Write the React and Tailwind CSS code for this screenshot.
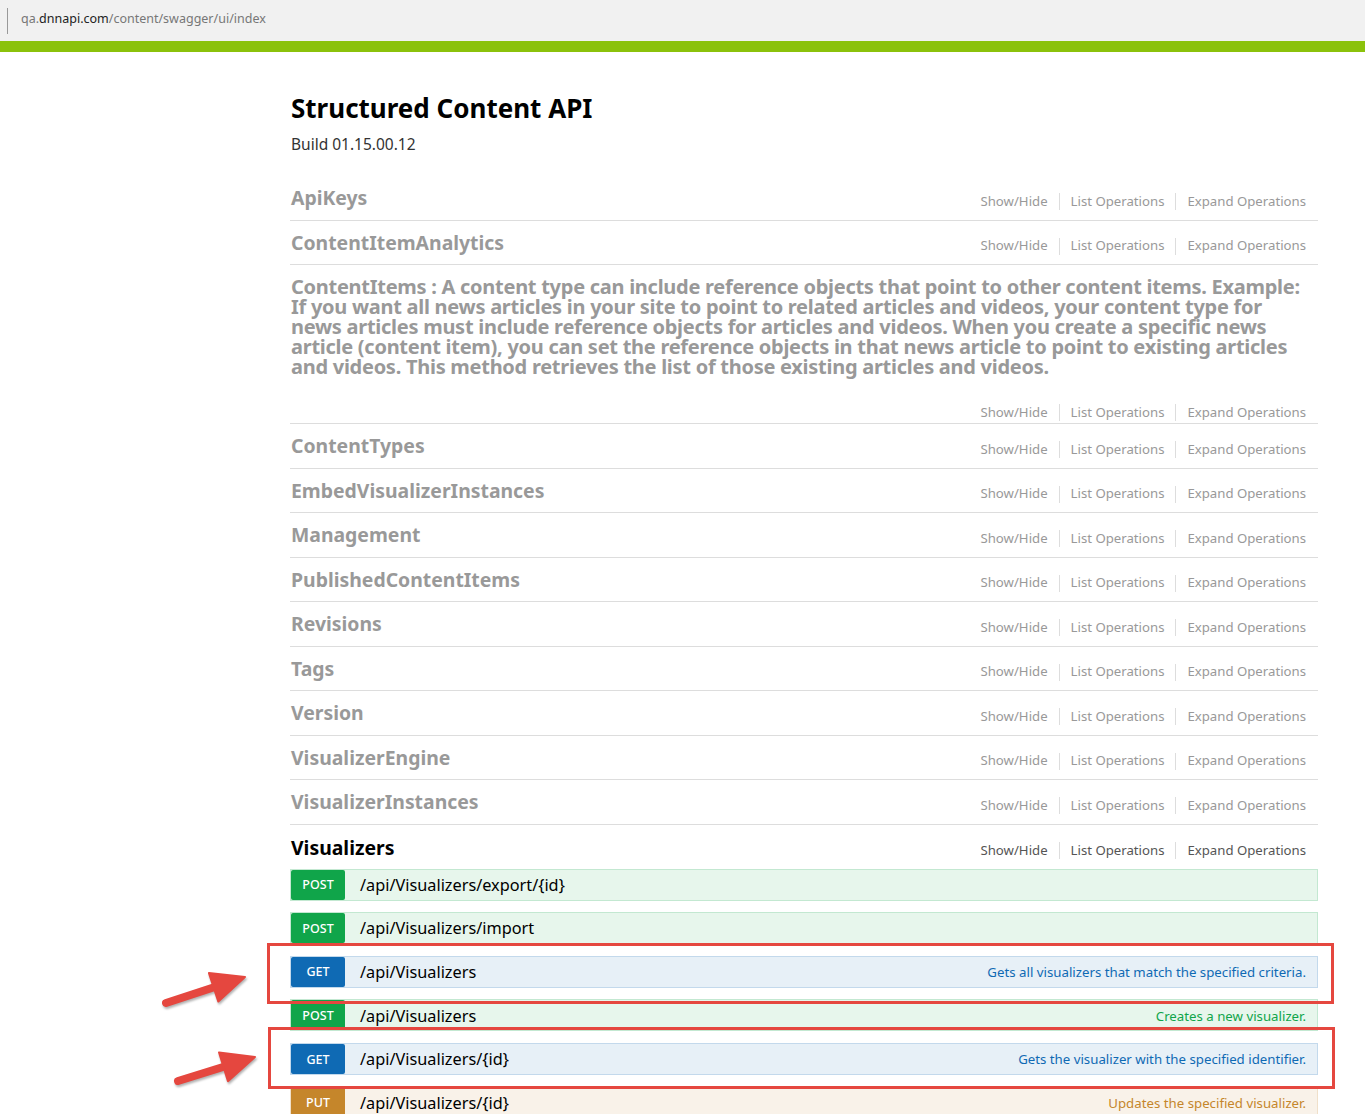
import React from 'react'

const FONT = { fontFamily: '"Noto Sans", "Open Sans", sans-serif' }

const GROUPS = [
  'ApiKeys',
  'ContentItemAnalytics',
  'ContentItems',
  'ContentTypes',
  'EmbedVisualizerInstances',
  'Management',
  'PublishedContentItems',
  'Revisions',
  'Tags',
  'Version',
  'VisualizerEngine',
  'VisualizerInstances',
]

const CONTENT_ITEMS_LINES = [
  'ContentItems : A content type can include reference objects that point to other content items. Example:',
  'If you want all news articles in your site to point to related articles and videos, your content type for',
  'news articles must include reference objects for articles and videos. When you create a specific news',
  'article (content item), you can set the reference objects in that news article to point to existing articles',
  'and videos. This method retrieves the list of those existing articles and videos.',
]

const OPS = [
  { method: 'post', path: '/api/Visualizers/export/{id}', desc: '' },
  { method: 'post', path: '/api/Visualizers/import', desc: '' },
  { method: 'get', path: '/api/Visualizers', desc: 'Gets all visualizers that match the specified criteria.' },
  { method: 'post', path: '/api/Visualizers', desc: 'Creates a new visualizer.' },
  { method: 'get', path: '/api/Visualizers/{id}', desc: 'Gets the visualizer with the specified identifier.' },
  { method: 'put', path: '/api/Visualizers/{id}', desc: 'Updates the specified visualizer.' },
]

const METHOD_STYLES = {
  post: { row: 'bg-[#e7f6ec] border-[#c3e8d1]', badge: 'bg-[#10a54a]', desc: 'text-[#10a54a]' },
  get: { row: 'bg-[#e7f0f7] border-[#c3d9ec]', badge: 'bg-[#0f6ab4]', desc: 'text-[#0f6ab4]' },
  put: { row: 'bg-[#f9f2e9] border-[#f0e0ca]', badge: 'bg-[#c5862b]', desc: 'text-[#c5862b]' },
}

function Links({ dark }) {
  const color = dark ? 'text-[#555]' : 'text-[#999]'
  return (
    <div className={`flex items-center text-[13.2px] ${color} pr-[12px] mt-[8px]`}>
      <span>Show/Hide</span>
      <span className="mx-[11px] h-[17px] w-px bg-[#ddd]" />
      <span>List Operations</span>
      <span className="mx-[11px] h-[17px] w-px bg-[#ddd]" />
      <span>Expand Operations</span>
    </div>
  )
}

function GroupRow({ name }) {
  return (
    <div className="h-[44.5px] border-b border-[#ddd] flex items-center justify-between">
      <h2 className="text-[19.4px] font-bold text-[#999] pl-[1px]">{name}</h2>
      <Links />
    </div>
  )
}

function ContentItemsRow() {
  return (
    <div className="border-b border-[#ddd] pt-[12px]">
      <h2 className="text-[20px] leading-[20px] font-bold text-[#999] pl-[1px] tracking-[-0.27px]">
        {CONTENT_ITEMS_LINES.map((l, i) => (
          <span key={i} className="block whitespace-nowrap">{l}</span>
        ))}
      </h2>
      <div className="flex justify-end h-[22px] mt-[24px] items-start">
        <div className="-mt-[6px]">
          <Links />
        </div>
      </div>
    </div>
  )
}

function OpRow({ op }) {
  const s = METHOD_STYLES[op.method]
  return (
    <div className={`h-[32px] border ${s.row} flex items-center`}>
      <span className={`${s.badge} h-full w-[54px] rounded-[2px] text-white text-[12.5px] font-medium uppercase flex items-center justify-center pt-[2px]`}>
        {op.method}
      </span>
      <span className="ml-[15px] text-[16.3px] text-black pt-[1px]">{op.path}</span>
      <span className={`ml-auto pr-[11px] pt-[3px] text-[13.25px] ${s.desc}`}>{op.desc}</span>
    </div>
  )
}

function Arrow({ tail, tip }) {
  const dx = tip[0] - tail[0]
  const dy = tip[1] - tail[1]
  const len = Math.hypot(dx, dy)
  const ux = dx / len
  const uy = dy / len
  const nx = -uy
  const ny = ux
  const hl = 33
  const hw = 15
  const bx = tip[0] - hl * ux
  const by = tip[1] - hl * uy
  return (
    <g>
      <line x1={tail[0]} y1={tail[1]} x2={bx + ux * 2} y2={by + uy * 2} stroke="#e5473f" strokeWidth="8" strokeLinecap="round" />
      <polygon
        points={`${tip[0]},${tip[1]} ${bx + hw * nx},${by + hw * ny} ${bx - hw * nx},${by - hw * ny}`}
        fill="#e5473f"
        stroke="#e5473f"
        strokeWidth="2"
        strokeLinejoin="round"
      />
    </g>
  )
}

export default function App() {
  return (
    <div className="relative min-h-screen bg-white" style={FONT}>
      {/* browser bar */}
      <div className="h-[41px] bg-[#f1f1f1] flex items-center">
        <span className="ml-[7px] h-[26px] w-px bg-[#999]" />
        <span className="ml-[13px] text-[12.5px] text-[#777] -mt-[2px]">
          qa.<span className="text-[#222]">dnnapi.com</span>/content/swagger/ui/index
        </span>
      </div>
      <div className="h-[11px] bg-[#8bc20b]" />

      <div className="ml-[290px] w-[1028px] pt-[40px]">
        <h1 className="text-[26px] leading-[32px] font-bold text-black pl-[1px]">Structured Content API</h1>
        <p className="mt-[10px] text-[15.5px] leading-[20px] text-[#333] pl-[1px]">Build 01.15.00.12</p>

        <div className="mt-[22px]">
          {GROUPS.map(g => (g === 'ContentItems' ? <ContentItemsRow key={g} /> : <GroupRow key={g} name={g} />))}

          <div className="h-[44px] flex items-center justify-between">
            <h2 className="text-[19.4px] font-bold text-black pl-[1px] pt-[2px]">Visualizers</h2>
            <Links dark />
          </div>
          <div className="flex flex-col gap-[11.6px]">
            {OPS.map((op, i) => (
              <OpRow key={i} op={op} />
            ))}
          </div>
        </div>
      </div>

      {/* annotations */}
      <div className="absolute left-[267px] top-[943px] w-[1067px] h-[61px] border-[3px] border-[#e5473f] pointer-events-none" />
      <div className="absolute left-[268px] top-[1027px] w-[1067px] h-[62px] border-[3px] border-[#e5473f] pointer-events-none" />
      <svg className="absolute left-0 top-0 pointer-events-none drop-shadow-[1px_2px_1px_rgba(0,0,0,0.3)]" width="300" height="1114">
        <Arrow tail={[166, 1003]} tip={[245, 977]} />
        <Arrow tail={[178, 1081]} tip={[255, 1057]} />
      </svg>
    </div>
  )
}
